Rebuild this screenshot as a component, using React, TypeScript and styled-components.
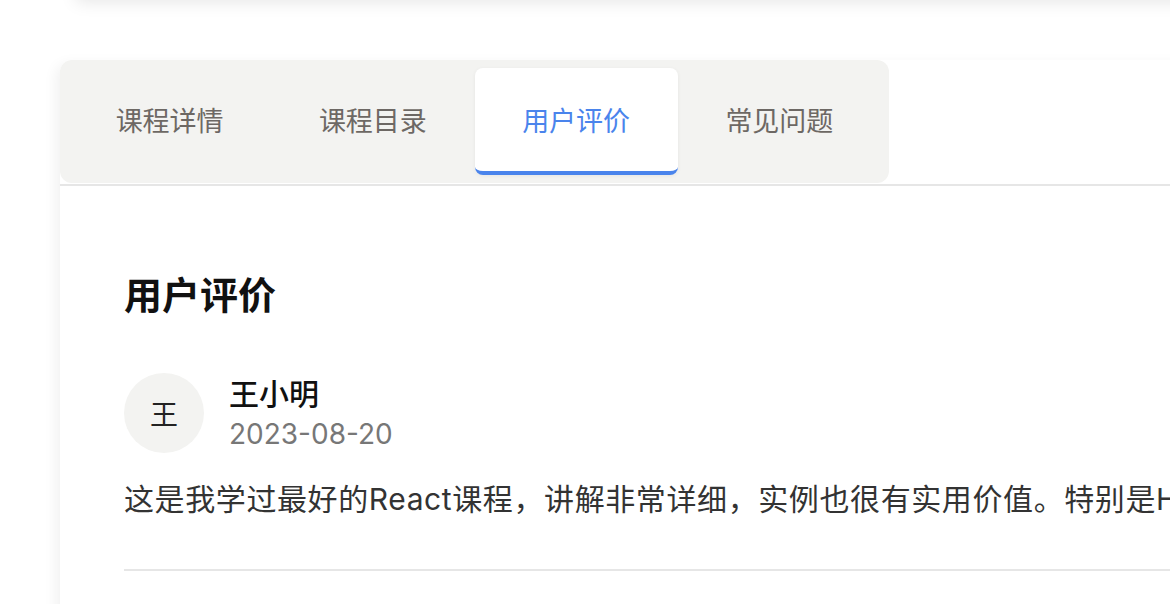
import React, { useState } from "react";
import styled, { createGlobalStyle } from "styled-components";

const GlobalStyle = createGlobalStyle`
    html, body {
        margin: 0;
        padding: 0;
        background: #ffffff;
        overflow: hidden;
    }
    body {
        font-family: "Inter", "Noto Sans CJK SC", sans-serif;
        color: #222;
    }
`;

const Page = styled.div`
    width: 1170px;
    height: 604px;
    overflow: hidden;
    padding-left: 60px;
    box-sizing: border-box;
`;

const TopBar = styled.header`
    height: 60px;
    margin: -60px 0 0 16px;
    width: 1300px;
    background: #ffffff;
    box-shadow: 0 2px 16px rgba(0, 0, 0, 0.1);
`;

const Card = styled.section`
    margin-top: 60px;
    width: 1300px;
    min-height: 700px;
    background: #ffffff;
    border-radius: 12px 0 0 0;
    box-shadow: -4px 4px 14px rgba(0, 0, 0, 0.06);
`;

const TabHeader = styled.div`
    border-bottom: 2px solid #e6e6e6;
    padding-bottom: 1px;
`;

const TabBar = styled.nav`
    width: 829px;
    box-sizing: border-box;
    padding: 8px;
    background: #f3f3f1;
    border-radius: 12px;
    display: flex;
`;

const Tab = styled.button<{ $active: boolean }>`
    flex: 1;
    height: 107px;
    border: none;
    border-radius: 8px;
    font-family: inherit;
    font-size: 27px;
    cursor: pointer;
    background: ${(p) => (p.$active ? "#ffffff" : "transparent")};
    color: ${(p) => (p.$active ? "#4a84ec" : "#6d6864")};
    border-bottom: 4px solid ${(p) => (p.$active ? "#4a84ec" : "transparent")};
    box-shadow: ${(p) => (p.$active ? "0 1px 4px rgba(0, 0, 0, 0.06)" : "none")};
    padding: 0;
`;

const Content = styled.div`
    padding: 84px 64px 0;
`;

const Title = styled.h2`
    margin: 0;
    font-size: 38px;
    line-height: 50px;
    font-weight: 700;
    color: #111;
`;

const Review = styled.article`
    margin-top: 53px;
    padding-bottom: 46px;
    border-bottom: 2px solid #e6e6e6;
`;

const ReviewHead = styled.div`
    display: flex;
    align-items: flex-start;
    gap: 25px;
`;

const Avatar = styled.div`
    width: 80px;
    height: 80px;
    border-radius: 50%;
    background: #f3f3f1;
    display: flex;
    align-items: center;
    justify-content: center;
    font-size: 28px;
    color: #222;
`;

const Meta = styled.div`
    display: flex;
    flex-direction: column;
`;

const Name = styled.span`
    font-size: 30px;
    line-height: 42px;
    font-weight: 500;
    color: #111;
`;

const DateText = styled.span`
    font-size: 28px;
    line-height: 38px;
    color: #777;
`;

const ReviewText = styled.p`
    margin: 22px 0 0;
    font-size: 30px;
    letter-spacing: 0.6px;
    line-height: 48px;
    color: #333;
    white-space: nowrap;
`;

const tabs = ["课程详情", "课程目录", "用户评价", "常见问题"];

export default function App() {
    const [active, setActive] = useState(2);

    return (
        <>
            <GlobalStyle />
            <Page>
                <TopBar />
                <Card>
                    <TabHeader>
                        <TabBar>
                            {tabs.map((t, i) => (
                                <Tab key={t} $active={i === active} onClick={() => setActive(i)}>
                                    {t}
                                </Tab>
                            ))}
                        </TabBar>
                    </TabHeader>
                    <Content>
                        <Title>用户评价</Title>
                        <Review>
                            <ReviewHead>
                                <Avatar>王</Avatar>
                                <Meta>
                                    <Name>王小明</Name>
                                    <DateText>2023-08-20</DateText>
                                </Meta>
                            </ReviewHead>
                            <ReviewText>
                                这是我学过最好的React课程，讲解非常详细，实例也很有实用价值。特别是Hooks部分的讲解，让我对React有了更深入的理解。
                            </ReviewText>
                        </Review>
                    </Content>
                </Card>
            </Page>
        </>
    );
}
